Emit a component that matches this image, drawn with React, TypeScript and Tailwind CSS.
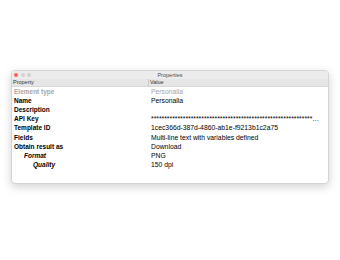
const rows = [
    { label: "Element type", value: "Personalia", dim: true, indent: 0 },
    { label: "Name", value: "Personalia", indent: 0 },
    { label: "Description", value: "", indent: 0 },
    { label: "API Key", value: "*".repeat(90), indent: 0 },
    { label: "Template ID", value: "1cec366d-387d-4860-ab1e-f9213b1c2a75", indent: 0 },
    { label: "Fields", value: "Multi-line text with variables defined", indent: 0 },
    { label: "Obtain result as", value: "Download", indent: 0 },
    { label: "Format", value: "PNG", indent: 1 },
    { label: "Quality", value: "150 dpi", indent: 2 },
]

const App = () => {
    return (
        <div className="w-[340px] h-[260px] bg-white pt-[70px] pl-[11px] font-['Liberation_Sans',Arial,sans-serif]">
            <div className="w-[318px] h-[114px] rounded-[4px] border border-[#d4d4d4] bg-white shadow-[0_3px_10px_rgba(0,0,0,0.18)] overflow-hidden flex flex-col">
                {/* title bar */}
                <div className="h-[8px] bg-[#ececec] flex items-center px-[1px] relative">
                    <div className="flex gap-[2.5px] pl-[1px]">
                        <span className="w-[4px] h-[4px] rounded-full bg-[#fe5f57]" />
                        <span className="w-[4px] h-[4px] rounded-full bg-[#d3d3d3]" />
                        <span className="w-[4px] h-[4px] rounded-full bg-[#d3d3d3]" />
                    </div>
                    <p className="absolute inset-0 text-center text-[5.5px] leading-[8px] text-[#4d4d4d]">Properties</p>
                </div>

                {/* header */}
                <div className="h-[8px] bg-[#e6e6e6] border-b border-[#d8d8d8] grid grid-cols-[136px_1fr] text-[5.5px] leading-[7px] text-[#333]">
                    <p className="pl-[1px]">Property</p>
                    <p className="pl-[1px] border-l border-[#c8c8c8]">Value</p>
                </div>

                <div className="flex flex-col">
                    {rows.map((r) => (
                        <div key={r.label} className="h-[9.1px] grid grid-cols-[137px_172px] items-center leading-[9px]">
                            <p className={`text-[6.5px] font-bold pl-[2px] ${r.indent === 1 ? "!pl-[12px] italic" : ""} ${r.indent === 2 ? "!pl-[21px] italic" : ""} ${r.dim ? "text-[#a6a6a6]" : "text-black"}`}>
                                {r.label}
                            </p>
                            <p className={`text-[6.8px] truncate pl-[2px] ${r.dim ? "text-[#a6a6a6]" : "text-black"}`}>
                                {r.value}
                            </p>
                        </div>
                    ))}
                </div>
            </div>
        </div>
    )
}

export default App
